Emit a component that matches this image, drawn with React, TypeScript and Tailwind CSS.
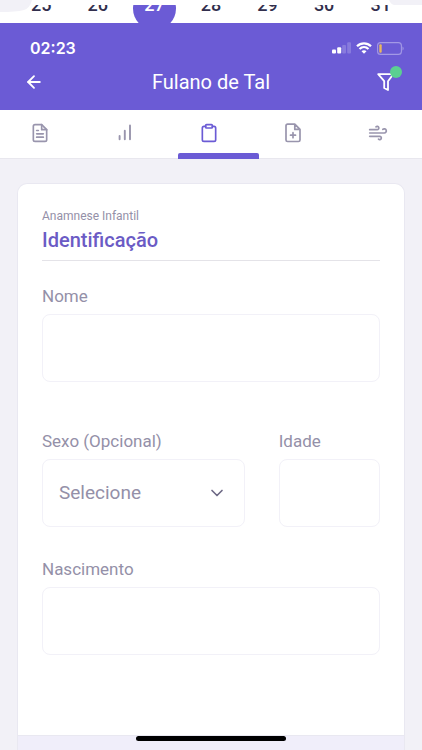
import React from "react";
import { ArrowLeft, ChevronDown } from "lucide-react";
import { FiFileText, FiClipboard, FiWind } from "react-icons/fi";

const days = ["25", "26", "27", "28", "29", "30", "31"];

function DayStrip() {
  return (
    <div className="relative h-[23px] bg-white pt-[5px]">
      <svg className="absolute top-0 left-0" width="32" height="12" viewBox="0 0 32 12" fill="#f2f1f7" aria-hidden="true">
        <path d="M0 0H32Q30 8 24 10Q16 12 0 12Z" />
      </svg>
      <svg className="absolute top-0 right-0" width="33" height="6" viewBox="0 0 33 6" fill="#f2f1f7" aria-hidden="true">
        <path d="M0 0H33V5H6Q2 5 0 0Z" />
      </svg>
      <div className="relative h-[18px] overflow-hidden px-[13px]">
        <div className="-mt-[18px] grid grid-cols-7 justify-items-center text-[18px] leading-[36px] font-medium text-[#322f4d]">
          {days.map((day) =>
            day === "27" ? (
              <span key={day} className="h-[43px] w-[43px] rounded-full bg-[#6b5bd5] text-center text-white">
                {day}
              </span>
            ) : (
              <span key={day}>{day}</span>
            )
          )}
        </div>
      </div>
    </div>
  );
}

function StatusIcons() {
  return (
    <div className="flex items-center gap-[5px]">
      <svg width="19" height="12" viewBox="0 0 19 12" fill="white" aria-hidden="true">
        <rect x="0" y="7.5" width="4" height="4" rx="1" />
        <rect x="5.2" y="5.2" width="4" height="6.3" rx="1" />
        <rect x="10.2" y="3" width="3.8" height="8.5" rx="1" opacity=".2" />
        <rect x="15.2" y="0.3" width="3.8" height="11.2" rx="1" opacity=".2" />
      </svg>
      <svg width="16" height="12" viewBox="0 0 16 12" fill="none" aria-hidden="true">
        <path d="M1 4.3C5 .3 11 .3 15 4.3" stroke="white" strokeWidth="2.2" />
        <path d="M3.5 7C6.1 4.5 9.9 4.5 12.5 7" stroke="white" strokeWidth="2.2" />
        <path d="M5.5 9.2C7 7.9 9 7.9 10.5 9.2L8 11.8Z" fill="white" />
      </svg>
      <svg width="27" height="13" viewBox="0 0 27 13" fill="none" aria-hidden="true">
        <rect x=".6" y=".6" width="23.8" height="11.8" rx="3" stroke="white" strokeOpacity=".38" strokeWidth="1.1" />
        <rect x="2.3" y="2.2" width="2.4" height="8.6" rx="1" fill="#e9b75e" />
        <path d="M25.6 4.5C26.8 5 26.8 8 25.6 8.5Z" fill="white" fillOpacity=".5" />
      </svg>
    </div>
  );
}

function Header() {
  return (
    <header className="bg-[#6b5bd5] pt-[13px] pb-2 text-white">
      <div className="flex h-6 items-center justify-between pr-[18px] pl-[30px]">
        <span className="font-['Inter'] text-[16px] leading-6 font-semibold">02:23</span>
        <StatusIcons />
      </div>
      <div className="mt-[2px] flex h-10 items-center justify-between px-6">
        <button type="button" aria-label="Voltar" className="flex w-6">
          <ArrowLeft size={20} strokeWidth={2.2} />
        </button>
        <h1 className="text-[20px] leading-10 font-normal">Fulano de Tal</h1>
        <button type="button" aria-label="Filtrar" className="relative flex h-6 w-6 items-center justify-center">
          <svg width="18" height="18" viewBox="0 0 18 18" fill="none" stroke="white" strokeWidth="1.8" strokeLinejoin="round">
            <path d="M1.2 1.2H16.2L11 8.2V17L7.2 15V8.2Z" />
          </svg>
          <span className="absolute -top-1 -right-1 h-3 w-3 rounded-full bg-[#5bcf92]" />
        </button>
      </div>
    </header>
  );
}

function BarsIcon() {
  return (
    <svg width="20" height="20" viewBox="0 0 20 20" stroke="currentColor" strokeWidth="1.9" strokeLinecap="round">
      <path d="M4.6 16.2V13M9.8 16.2V7.7M15 16.2V2.5" />
    </svg>
  );
}

function FileAddIcon() {
  return (
    <svg width="20" height="20" viewBox="0 0 20 20" fill="none" stroke="currentColor" strokeWidth="1.7" strokeLinecap="round" strokeLinejoin="round">
      <path d="M11.8 1.2H4.6Q3 1.2 3 2.8V16.9Q3 18.5 4.6 18.5H15.4Q17 18.5 17 16.9V6.4ZM11.8 1.2V6.4H17M10 9.7V14.7M7.5 12.2H12.5" />
    </svg>
  );
}

const tabs = [
  { name: "Documentos", icon: <FiFileText size={20} /> },
  { name: "Gráficos", icon: <BarsIcon /> },
  { name: "Anamnese", icon: <FiClipboard size={20} /> },
  { name: "Novo documento", icon: <FileAddIcon /> },
  { name: "Respiração", icon: <FiWind size={20} /> },
];

function Tabs() {
  return (
    <nav className="-ml-[2px] grid h-[49px] grid-cols-5 border-b border-[#e8e7ee] bg-white pr-[2px]">
      {tabs.map((tab) => {
        const active = tab.name === "Anamnese";
        return (
          <button
            key={tab.name}
            type="button"
            aria-label={tab.name}
            className={
              active
                ? "relative flex items-center justify-center pb-[2px] text-[#6b5bd5]"
                : "flex items-center justify-center pb-[2px] text-[#9995ad]"
            }
          >
            {tab.icon}
            {active && <span className="absolute -bottom-px left-[11px] h-[6px] w-[81px] rounded-t-[2px] bg-[#6b5bd5]" />}
          </button>
        );
      })}
    </nav>
  );
}

const field = "block h-[68px] w-full rounded-lg border border-[#f2f1f8] bg-white px-4 text-[19px] text-[#9490a8] outline-none";
const caption = "mb-2 block text-[17px] leading-5 text-[#9490a8]";

export default function App() {
  return (
    <div className="relative flex min-h-screen flex-col overflow-x-hidden bg-[#f2f1f7] font-['Roboto',sans-serif]">
      <DayStrip />
      <Header />
      <Tabs />
      <main className="flex flex-1 flex-col px-[17px] pt-6">
        <form className="flex flex-1 flex-col rounded-t-[10px] border border-b-0 border-[#e9e8f1] bg-white">
          <div className="px-6 pt-6 pb-20">
            <div className="border-b border-[#e4e3e8] pb-2">
              <p className="text-[12px] leading-4 text-[#9490a8]">Anamnese Infantil</p>
              <h2 className="pt-1 text-[20px] leading-6 font-medium text-[#6b5bc5]">Identificação</h2>
            </div>
            <div className="pt-[25px]">
              <label htmlFor="nome" className={caption}>Nome</label>
              <input id="nome" type="text" className={field} />
            </div>
            <div className="mt-[49px] flex gap-[34px]">
              <div className="flex-2">
                <label htmlFor="sexo" className={caption}>Sexo (Opcional)</label>
                <div className="relative">
                  <select id="sexo" className={`${field} appearance-none`}>
                    <option>Selecione</option>
                    <option>Feminino</option>
                    <option>Masculino</option>
                  </select>
                  <ChevronDown size={20} className="pointer-events-none absolute top-6 right-[18px] text-[#6d6985]" />
                </div>
              </div>
              <div className="flex-1">
                <label htmlFor="idade" className={caption}>Idade</label>
                <input id="idade" type="text" inputMode="numeric" className={field} />
              </div>
            </div>
            <div className="mt-8">
              <label htmlFor="nascimento" className={caption}>Nascimento</label>
              <input id="nascimento" type="text" className={field} />
            </div>
          </div>
          <div className="min-h-4 flex-1 border-t border-[#e9e8f1] bg-[#f0eefa]" />
        </form>
      </main>
      <div className="fixed bottom-[9px] left-1/2 h-[5px] w-[150px] -translate-x-1/2 rounded-full bg-black" />
    </div>
  );
}
